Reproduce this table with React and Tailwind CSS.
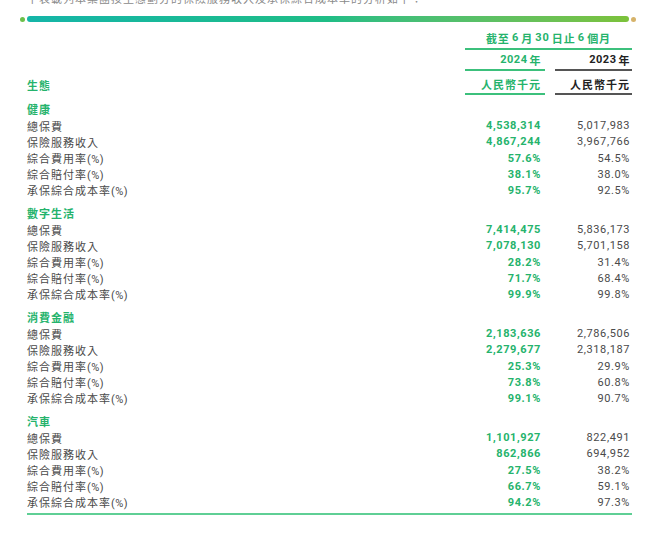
import React from "react";

const G = "text-[#25b36c]";
const sections = [
  {
    name: "健康",
    rows: [
      ["總保費", "4,538,314", "5,017,983"],
      ["保險服務收入", "4,867,244", "3,967,766"],
      ["綜合費用率", "57.6%", "54.5%", true],
      ["綜合賠付率", "38.1%", "38.0%", true],
      ["承保綜合成本率", "95.7%", "92.5%", true],
    ],
  },
  {
    name: "數字生活",
    rows: [
      ["總保費", "7,414,475", "5,836,173"],
      ["保險服務收入", "7,078,130", "5,701,158"],
      ["綜合費用率", "28.2%", "31.4%", true],
      ["綜合賠付率", "71.7%", "68.4%", true],
      ["承保綜合成本率", "99.9%", "99.8%", true],
    ],
  },
  {
    name: "消費金融",
    rows: [
      ["總保費", "2,183,636", "2,786,506"],
      ["保險服務收入", "2,279,677", "2,318,187"],
      ["綜合費用率", "25.3%", "29.9%", true],
      ["綜合賠付率", "73.8%", "60.8%", true],
      ["承保綜合成本率", "99.1%", "90.7%", true],
    ],
  },
  {
    name: "汽車",
    rows: [
      ["總保費", "1,101,927", "822,491"],
      ["保險服務收入", "862,866", "694,952"],
      ["綜合費用率", "27.5%", "38.2%", true],
      ["綜合賠付率", "66.7%", "59.1%", true],
      ["承保綜合成本率", "94.2%", "97.3%", true],
    ],
  },
];

const NUM = "font-['Roboto','Noto_Sans_CJK_TC',sans-serif]";

export default function App() {
  return (
    <div className="w-[660px] h-[535px] bg-white overflow-hidden pl-[27px] pr-[28px] font-['Noto_Sans_CJK_TC','Noto_Sans',sans-serif]">
      <div className="h-[5px] overflow-hidden">
        <div className="text-[11px] leading-[14px] -mt-[9px] tracking-[1px] text-[#8a8a8a] whitespace-nowrap">
          下表載列本集團按生態劃分的保險服務收入及承保綜合成本率的分析如下：
        </div>
      </div>
      <div className="mt-[11px] flex items-center gap-[2px] -ml-[7px] -mr-[4px]">
        <div className="w-[5px] h-[5px] rounded-full bg-[#6cc04a]" />
        <div className="flex-1 h-[6px] rounded-full bg-gradient-to-r from-[#15b5a8] via-[#1fbd86] to-[#7cc23a]" />
        <div className="w-[5px] h-[5px] rounded-full bg-[#d6b36a]" />
      </div>

      <div className="grid grid-cols-[1fr_80px_77px] gap-x-[10px]">
        <div />
        <div
          className={`col-span-2 mt-[6px] h-[22px] border-b-2 border-[#3cc07c] flex items-center justify-center text-[11px] font-bold tracking-[1px] ${G}`}
        >
          截至<span className={`${NUM} mx-[2px]`}>6</span>月
          <span className={`${NUM} mx-[2px]`}>30</span>日止
          <span className={`${NUM} mx-[2px]`}>6</span>個月
        </div>

        <div />
        <div
          className={`mt-[2px] h-[19px] border-b-2 border-[#3cc07c] flex items-center justify-end pr-[4px] text-[11px] font-bold tracking-[0.5px] ${G}`}
        >
          <span className={NUM}>2024</span>
          <span className="ml-[2px]">年</span>
        </div>
        <div className="mt-[2px] h-[19px] border-b-2 border-[#555] flex items-center justify-end pr-[2px] text-[11px] font-bold tracking-[0.5px] text-[#222]">
          <span className={NUM}>2023</span>
          <span className="ml-[2px]">年</span>
        </div>

        <div
          className={`mt-[4px] h-[20px] flex items-center text-[11px] font-bold tracking-[1px] ${G}`}
        >
          生態
        </div>
        <div
          className={`mt-[4px] h-[20px] border-b-2 border-[#3cc07c] flex items-center justify-end pr-[4px] text-[11px] font-bold tracking-[1px] ${G}`}
        >
          人民幣千元
        </div>
        <div className="mt-[4px] h-[20px] border-b-2 border-[#555] flex items-center justify-end pr-[2px] text-[11px] font-bold tracking-[1px] text-[#222]">
          人民幣千元
        </div>
      </div>

      {sections.map((s, i) => (
        <div key={s.name} className={i === 0 ? "mt-[6px]" : "mt-[7px]"}>
          <div
            className={`h-[17px] flex items-center text-[11px] font-bold tracking-[1px] ${G}`}
          >
            {s.name}
          </div>
          {s.rows.map((r) => (
            <div
              key={r[0]}
              className="grid grid-cols-[1fr_80px_77px] gap-x-[10px] h-[16px] items-center"
            >
              <span className="text-[11px] tracking-[1px] text-[#4a4a4a]">
                {r[0]}
                {r[3] && (
                  <span className={`${NUM} tracking-[0.5px]`}>(%)</span>
                )}
              </span>
              <span
                className={`${NUM} text-right pr-[4px] text-[11px] font-bold tracking-[0.6px] ${G}`}
              >
                {r[1]}
              </span>
              <span
                className={`${NUM} text-right pr-[2px] text-[11px] tracking-[0.6px] text-[#4a4a4a]`}
              >
                {r[2]}
              </span>
            </div>
          ))}
        </div>
      ))}
      <div className="mt-[3px] h-[2px] bg-[#5fcf95]" />
    </div>
  );
}
